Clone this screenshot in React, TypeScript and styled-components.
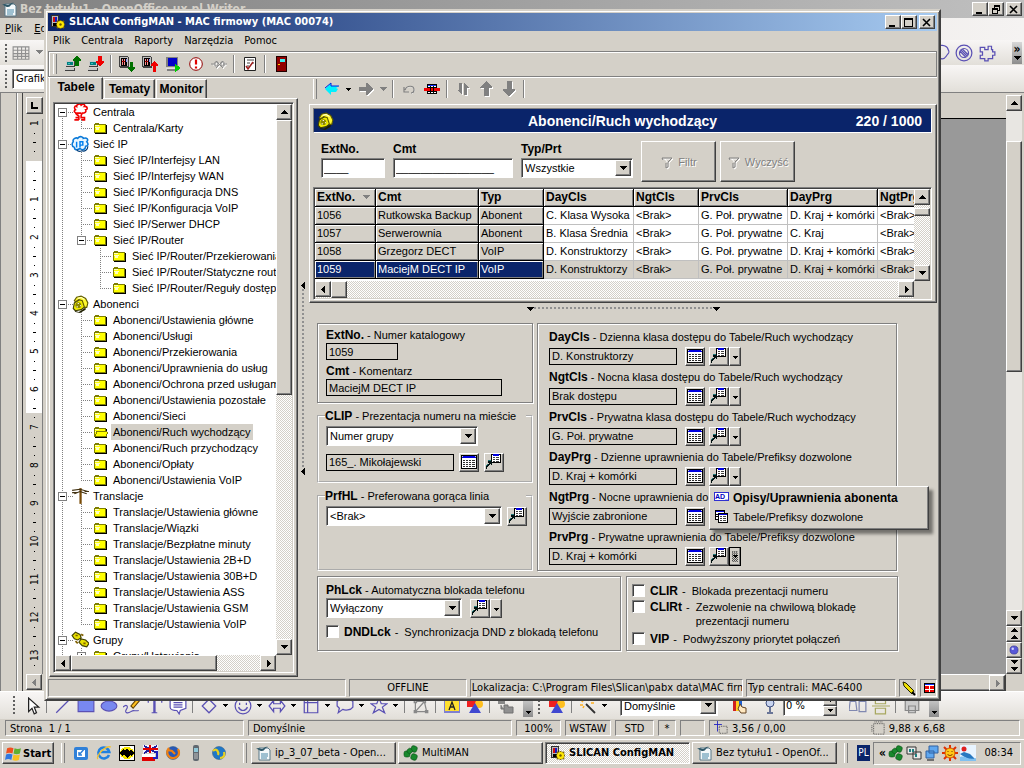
import React from "react";
import styled, { createGlobalStyle, css } from "styled-components";

const face = "#d4d0c8";
const navy = "#0a246a";
const ui = `"Liberation Sans", Arial, sans-serif`;
const tahoma = `"DejaVu Sans Condensed", "DejaVu Sans", sans-serif`;

const raised = css`
  border: 1px solid;
  border-color: #fff #404040 #404040 #fff;
  box-shadow: inset -1px -1px #808080;
  background: ${face};
`;
const sunken = css`
  border: 1px solid;
  border-color: #808080 #fff #fff #808080;
  box-shadow: inset 1px 1px #404040;
`;
const dither = css`
  background: repeating-conic-gradient(#fff 0 25%, ${face} 0 50%) 0 0 / 2px 2px;
`;

const Global = createGlobalStyle`
  * { box-sizing: border-box; }
  body { margin: 0; background: ${face}; font-family: ${ui}; font-size: 11px; line-height: 16px; color: #000; }
  button, input, select { font: inherit; color: inherit; margin: 0; padding: 0; border-radius: 0; }
  b { font-size: 12px; }
  svg { display: block; flex: none; }
`;

/* ---------- icons ---------- */

const Glyph = styled.svg.attrs({ "aria-hidden": true })<{ $crisp?: boolean }>`
  shape-rendering: ${(p) => (p.$crisp ? "crispEdges" : "auto")};
`;

type IconProps = { children: React.ReactNode; size?: number; crisp?: boolean };
const Icon = ({ children, size = 16, crisp = false }: IconProps) => (
  <Glyph width={size} height={size} viewBox="0 0 16 16" fill="none" $crisp={crisp}>
    {children}
  </Glyph>
);

const Caret = ({ color = "#000", dir = "down" }: { color?: string; dir?: "down" | "up" | "left" | "right" }) => {
  const shapes = {
    down: "M0 1h7v1h-1v1h-1v1h-1v1h-1v-1h-1v-1h-1v-1h-1z",
    up: "M3 1h1v1h1v1h1v1h1v1h-7v-1h1v-1h1v-1h1z",
    left: "M5 0v7h-1v-1h-1v-1h-1v-1h-1v-1h1v-1h1v-1h1v-1z",
    right: "M2 0v7h1v-1h1v-1h1v-1h1v-1h-1v-1h-1v-1h-1v-1z",
  };
  return (
    <Glyph width={7} height={7} viewBox="0 0 7 7" $crisp>
      <path fill={color} d={shapes[dir]} />
    </Glyph>
  );
};
const SmallCaret = () => (
  <Glyph width={5} height={5} viewBox="0 0 5 5" $crisp>
    <path fill="#000" d="M0 1h5v1H4v1H3v1H2V3H1V2H0z" />
  </Glyph>
);

const FolderIcon = ({ open = false }: { open?: boolean }) => (
  <Icon crisp>
    <path fill="#808000" d="M1 4h1V3h4v1h7v9H1z" />
    <path fill="#ffff00" d="M2 5h10v7H2z" />
    <path fill="#ffffc0" d="M2 5h4v1H2zM2 7h5v1H2zM3 8h3v2H3z" />
    <path fill="#000" d="M13 5h1v9H2v-1h11z" />
    {open && (
      <>
        <path fill="#808000" d="M3 7h11v1h1v2h-1v3H2v-3h1z" />
        <path fill="#ffff00" d="M4 8h10v2h-1v2H3v-2h1z" />
      </>
    )}
  </Icon>
);

const PhoneIcon = () => (
  <Icon size={18}>
    <path d="M4 14l-2-2 1-5 5-3 4 1 1 5-4 3z" fill="#f0ec00" stroke="#404000" />
    <path d="M3 14l4 1 6-4v2l-5 3-4-1z" fill="#202000" />
    <path d="M3 5l2-3 4-1 4 2 2 4-1 4-2 0-1-3-1-3-3-1-3 2z" fill="#fff830" stroke="#605c00" />
    <circle cx="6.500" cy="9" r="2.600" fill="#8c8800" />
    <path d="M6 7h1v1h-1zM8 9h1v1h-1zM5 10h1v1h-1z" fill="#fff" />
    <path d="M6 3l3-1 3 2" stroke="#ffffc0" />
  </Icon>
);

const ExchangeIcon = () => (
  <Icon size={18}>
    <path
      d="M6 9c-3 0-4-2-2-3-2-2 0-4 1-3 0-2 3-3 4-1 2-2 4 0 3 1 3 0 3 3 1 3 1 2-1 3-3 3l-1 2v2h3v2H9M6 9h3M4 9l2 2h1M4 13h3M3 15h4M7 11v4"
      stroke="#f00000"
      strokeWidth="1.400"
    />
  </Icon>
);
const CloudIpIcon = () => (
  <Icon size={18}>
    <path d="M2 6c-1-3 3-4 4-3 2-3 5-1 5 0 3-1 5 1 3 3 2 2 1 4-1 4 0 3-3 4-5 2-3 2-5 1-5-1-3-1-2-4-1-5z" fill="#e8f6ff" stroke="#0878d8" strokeWidth="1.400" />
    <path d="M5 13c2 3 4 1 5 1 2 1 5-1 5-4" stroke="#003c78" />
    <path d="M5 6v5M8 11V6h2.500v3H8" stroke="#0080f0" strokeWidth="1.300" />
  </Icon>
);
const PoleIcon = () => (
  <Icon size={18}>
    <path d="M8.500 1v14" stroke="#7a4c08" strokeWidth="2" />
    <path d="M1 3l7-1 7 2M3 6l5-2 6 2M1 5h4M12 4h4" stroke="#403010" />
  </Icon>
);
const GroupIcon = () => (
  <Icon size={18}>
    <path d="M1 4l3-3 4 2 1 3-3 2-3-1zM7 10l2-3 4 1 3 3-2 3-4-1z" fill="#e8e000" stroke="#404000" strokeWidth="1" />
    <path d="M4 4h2M11 11h2M9 3l2 1M4 9l2 2" stroke="#806000" strokeWidth="1.500" />
  </Icon>
);

const SlicanIcon = () => (
  <Icon>
    <path fill="#303030" d="M1 1h8v12H1z" />
    <path fill="#b8b8b8" d="M2 2h6v10H2z" />
    <path fill="#d01010" d="M3 3h2v5H3z" />
    <path fill="#1818c0" d="M5 3h2v5H5z" />
    <path fill="#000" d="M3 9h4v3H3z" />
    <path d="M10.500 6v9M6 10.500h9M7 7l7 7M14 7l-7 7" stroke="#806800" strokeWidth="2" />
    <circle cx="10.500" cy="10.500" r="3.500" fill="#ffe800" />
    <circle cx="10.500" cy="10.500" r="1.200" fill="#705800" />
  </Icon>
);

const Terminal = () => (
  <>
    <path fill="#404040" d="M1 5h9v6H1zM0 12h10v3H0z" />
    <path fill="#c8c8c8" d="M0 12h9v2H0zM1 5h8v5H1z" />
    <path fill="#008080" d="M2 6h6v3H2z" />
    <path fill="#40c0c0" d="M3 7h2v1H3z" />
  </>
);
const PcUpIcon = () => (
  <Icon crisp>
    <Terminal />
    <path fill="#007000" d="M11 0h2v1h1v1h1v1h1v2h-2v5H9V9h1V5H8V3h1V2h1V1h1z" />
  </Icon>
);
const PcDownIcon = () => (
  <Icon crisp>
    <Terminal />
    <path fill="#f00000" d="M10 0h4v5h2v2h-1v1h-1v1h-1v1h-2V9h-1V8H9V7H8V5h2z" />
  </Icon>
);
const Rack = () => (
  <>
    <path fill="#404040" d="M0 0h9v1h1v11H1v-1H0z" />
    <path fill="#c0c0c0" d="M1 1h8v9H1z" />
    <path fill="#000" d="M2 2h6v8H2z" />
    <path fill="#ff9090" d="M3 3h1v6H3zM5 3h1v6H5z" />
    <path fill="#9090ff" d="M7 3h1v3H7z" />
    <path fill="#a00000" d="M3 5h3v1H3z" />
  </>
);
const RackDownIcon = () => (
  <Icon crisp>
    <Rack />
    <path fill="#007000" d="M11 6h3v5h2v1l-3 4h-1l-3-4v-1h2z" />
  </Icon>
);
const RackUpIcon = () => (
  <Icon crisp>
    <Rack />
    <path fill="#f00000" d="M12 5h1l3 4v1h-2v6h-3v-6H9V9z" />
  </Icon>
);
const MonitorIcon = () => (
  <Icon crisp>
    <path fill="#808080" d="M1 1h12v10H1zM2 12h11v3H2z" />
    <path fill="#0000c8" d="M3 2h9v8H3z" />
    <path fill="#e0e0e0" d="M1 12h11v1H1z" />
    <path fill="#00d000" d="M10 8l6 4-6 4z" />
  </Icon>
);
const AlertIcon = () => (
  <Icon>
    <circle cx="8" cy="8" r="6.300" fill="#fff" stroke="#900000" />
    <path d="M8 3.500v5M8 10.500v2" stroke="#e00000" strokeWidth="2.200" />
  </Icon>
);
const PlugOffIcon = () => (
  <Icon>
    <path d="M1 8h3M13 8h3M4 6h3v4H4zM10 6h3v4h-3zM5 5l7 7M12 5l-7 7" stroke="#fff" transform="translate(1 1)" />
    <path d="M0 8h4M12 8h4M4 6h3v4H4zM10 6h3v4h-3zM5 5l7 7M12 5l-7 7" stroke="#8a8a8a" />
  </Icon>
);
const ReportIcon = () => (
  <Icon>
    <path d="M2.500 1.500h11v13h-11z" fill="#fff" stroke="#202020" />
    <path d="M5 4h7M5 7h3M10 7h2M5 10h2" stroke="#404040" />
    <path d="M4 10l2 3 5-7" stroke="#a02020" strokeWidth="1.500" />
  </Icon>
);
const DoorIcon = () => (
  <Icon crisp>
    <path fill="#200000" d="M3 0h11v16H3z" />
    <path fill="#900000" d="M4 1h9v14H4z" />
    <path fill="#40f0f0" d="M7 3h5v3H7z" />
    <path fill="#ffd000" d="M5 8h2v1H5z" />
  </Icon>
);

const ArrowIcon = ({ d, color = "#808080", edge = "#fff" }: { d: string; color?: string; edge?: string }) => (
  <Icon crisp>
    <path fill={edge} d={d} transform="translate(1 1)" />
    <path fill={color} d={d} />
  </Icon>
);
const BackIcon = () => (
  <Icon>
    <path d="M1 8l6-6v3h8l-3 2 2 1-2 3H7v3z" fill="#00f0ff" />
    <path d="M1 7l6-5v3h8" stroke="#0020e0" />
  </Icon>
);
const UndoIcon = () => (
  <Icon>
    <path d="M4 7c3-4 9-3 8 3l-2 2" stroke="#fff" transform="translate(1 1)" />
    <path d="M3 6v5h5M4 9c2-5 9-5 9 0 0 2-1 3-3 3" stroke="#808080" strokeWidth="1.200" />
  </Icon>
);
const RowIcon = () => (
  <Icon crisp>
    <path fill="#000" d="M3 3h10v10H3z" />
    <path fill="#fff" d="M4 5h8v7H4z" />
    <path fill="#1030ff" d="M4 4h8v1H4z" />
    <path fill="#f00000" d="M0 7h16v3H0z" />
    <path fill="#000" d="M4 6h8v1H4zM4 10h8v1H4zM6 5h1v8H6zM9 5h1v8H9z" />
  </Icon>
);

const TableIcon = () => (
  <Icon crisp>
    <path fill="#000" d="M0 1h16v14H0z" />
    <path fill="#fff" d="M1 4h14v10H1z" />
    <path fill="#0000e0" d="M1 2h14v2H1z" />
    <path fill="#d4d0c8" d="M1 2h1v1H1zM14 2h1v1h-1z" />
    <path fill="#303030" d="M2 6h2v1H2zM5 6h2v1H5zM8 6h2v1H8zM11 6h3v1h-3zM2 8h2v1H2zM5 8h2v1H5zM8 8h2v1H8zM11 8h3v1h-3zM2 10h2v1H2zM5 10h2v1H5zM8 10h2v1H8zM11 10h3v1h-3zM2 12h2v1H2zM5 12h2v1H5zM8 12h2v1H8zM11 12h3v1h-3z" />
  </Icon>
);
const JumpIcon = () => (
  <Icon crisp>
    <path fill="#000" d="M5 0h10v9H5z" />
    <path fill="#fff" d="M6 2h8v6H6z" />
    <path fill="#0000e0" d="M7 0h6v1H7z" />
    <path fill="#fff" d="M6 1h1v1H6zM13 1h1v1h-1z" />
    <path fill="#0000e0" d="M7 1h6v1H7z" />
    <path fill="#404040" d="M7 3h2v1H7zM10 3h3v1h-3zM7 5h2v1H7zM10 5h3v1h-3zM7 7h2v1H7zM10 7h3v1h-3z" />
    <path fill="#001010" d="M2 7h4v4H5v-1H4v1H3v1H2v1H1v2H0v-3h1v-1h1v-1h1V9H2z" />
    <path fill="#207878" d="M2 6h3v1H2zM0 11h1v1H0zM1 10h1v1H1z" />
  </Icon>
);
const FunnelIcon = () => (
  <Icon>
    <path d="M2 4h10l-4 4v5l-2 1v-5M4 4l3 4" stroke="#fff" transform="translate(1 1)" />
    <path d="M2 4h10l-4 4v5l-2 1v-5M2 4l1 2" stroke="#808080" />
  </Icon>
);
const TwoTablesIcon = () => (
  <Icon crisp>
    <path fill="#000" d="M1 1h10v10H1z" />
    <path fill="#fff" d="M2 3h8v7H2z" />
    <path fill="#0000e0" d="M2 2h8v1H2z" />
    <path fill="#000" d="M2 5h3v1H2zM2 7h3v1H2zM4 4h10v10H4z" />
    <path fill="#fff" d="M5 6h8v7H5z" />
    <path fill="#0000e0" d="M5 5h8v1H5z" />
    <path fill="#404040" d="M6 7h2v1H6zM9 7h3v1H9zM6 9h2v1H6zM9 9h3v1H9zM6 11h2v1H6zM9 11h3v1H9z" />
  </Icon>
);
const AdBadge = styled.span`
  width: 15px;
  height: 9px;
  margin-bottom: 4px;
  border: 1px solid #3030d0;
  background: #fff;
  color: #0000c0;
  font: bold 7px/7px ${ui};
  text-align: center;
  overflow: hidden;
`;

const WriterIcon = () => (
  <Icon>
    <path d="M3 3h9l2 2v10H3z" fill="#f4f8fa" stroke="#587888" />
    <path d="M5 9h7M5 11h7M5 13h6" stroke="#4888a8" />
    <path d="M0 4c3-2 4 0 6 0s3-3 6-2c-3 0-3 4-6 4S3 4 0 4z" fill="#305868" />
  </Icon>
);
const CloverIcon = () => (
  <Icon>
    <g fill="#18882c" stroke="#0c5018" strokeWidth="0.600">
      <rect x="8" y="1" width="6" height="6" rx="2" transform="rotate(20 11 4)" />
      <rect x="1" y="6" width="6" height="6" rx="2" />
      <rect x="8" y="9" width="6" height="6" rx="2" transform="rotate(20 11 12)" />
      <rect x="4" y="3" width="5" height="5" rx="2" transform="rotate(45 6 6)" />
    </g>
  </Icon>
);
const PencilIcon = () => (
  <Icon>
    <path d="M2 2l3 1 8 8-2 3-8-8z" fill="#f0e000" stroke="#202000" />
    <path d="M11 12l3 3" stroke="#000" strokeWidth="2" />
  </Icon>
);
const MiniRowIcon = () => (
  <Icon crisp>
    <path fill="#000" d="M2 3h11v10H2z" />
    <path fill="#fff" d="M3 5h9v7H3z" />
    <path fill="#1030ff" d="M3 4h9v1H3z" />
    <path fill="#f00000" d="M3 6h4v3H3zM8 6h4v3H8zM3 10h4v2H3zM8 10h4v2H8z" />
  </Icon>
);

/* ---------- shared controls ---------- */

const Grip = styled.span<{ $h?: number; $dots?: boolean }>`
  flex: none;
  width: 4px;
  margin: 0 4px;
  height: ${(p) => p.$h ?? 20}px;
  ${(p) =>
    p.$dots
      ? css`background: repeating-linear-gradient(#606060 0 2px, transparent 2px 4px) 1px 0 / 2px 100% no-repeat;`
      : css`border-left: 1px solid #fff; border-right: 1px solid #808080;`}
`;
const Sep = styled.span<{ $soft?: boolean }>`
  flex: none;
  width: 2px;
  height: ${(p) => (p.$soft ? 14 : 18)}px;
  margin: 0 3px;
  border-left: 1px solid #808080;
  border-right: 1px solid ${(p) => (p.$soft ? "transparent" : "#fff")};
`;
const Tool = styled.button<{ $w?: number }>`
  flex: none;
  display: flex;
  align-items: center;
  justify-content: center;
  width: ${(p) => p.$w ?? 23}px;
  height: 22px;
  border: 0;
  background: none;
`;

const Edge = styled.button<{ $size?: number }>`
  ${raised}
  flex: none;
  display: flex;
  align-items: center;
  justify-content: center;
  width: ${(p) => p.$size ?? 16}px;
  height: ${(p) => p.$size ?? 16}px;
`;
const Bar = styled.div<{ $row?: boolean; $flat?: boolean }>`
  flex: none;
  display: flex;
  flex-direction: ${(p) => (p.$row ? "row" : "column")};
  ${(p) => (p.$flat ? css`background: #e8e6e2;` : dither)}
`;
const Thumb = styled.div<{ $row?: boolean; $len: number; $before?: number }>`
  ${raised}
  flex: none;
  ${(p) => (p.$row ? `width: ${p.$len}px; margin-left: ${p.$before ?? 0}px;` : `height: ${p.$len}px; margin-top: ${p.$before ?? 0}px;`)}
`;
const Spacer = styled.span`
  flex: 1;
`;

type ScrollProps = { row?: boolean; len: number; before?: number };
const Scroll = ({ row, len, before }: ScrollProps) => (
  <Bar $row={row}>
    <Edge aria-label="Wstecz"><Caret dir={row ? "left" : "up"} /></Edge>
    <Thumb $row={row} $len={len} $before={before} />
    <Spacer />
    <Edge aria-label="Dalej"><Caret dir={row ? "right" : "down"} /></Edge>
  </Bar>
);

const TextField = styled.input<{ $w: number; $flat?: boolean }>`
  width: ${(p) => p.$w}px;
  height: ${(p) => (p.$flat ? 17 : 20)}px;
  padding: 0 2px;
  outline: 0;
  ${(p) => (p.$flat ? css`border: 1px solid #000; background: ${face};` : css`${sunken} background: #fff;`)}
`;
const ComboBox = styled.span<{ $w: number }>`
  ${sunken}
  flex: none;
  display: flex;
  width: ${(p) => p.$w}px;
  height: 20px;
  padding: 1px;
  background: #fff;
  select {
    flex: 1;
    min-width: 0;
    appearance: none;
    border: 0;
    padding-left: 2px;
    background: none;
    outline: 0;
  }
  > span {
    ${raised}
    flex: none;
    display: flex;
    align-items: center;
    justify-content: center;
    width: 16px;
  }
`;
const Combo = ({ id, value, w, label }: { id?: string; value: string; w: number; label?: string }) => (
  <ComboBox $w={w}>
    <select id={id} aria-label={label} defaultValue={value}>
      <option>{value}</option>
    </select>
    <span><Caret /></span>
  </ComboBox>
);

/* ---------- Writer window behind ---------- */

const Desktop = styled.div`
  position: relative;
  display: flex;
  flex-direction: column;
  min-height: 100vh;
  min-width: 960px;
  overflow: hidden;
`;
const WriterTitle = styled.header`
  display: flex;
  align-items: center;
  gap: 2px;
  height: 18px;
  padding: 0 2px;
  background: linear-gradient(to right, #808080, #c0c0c0);
  color: ${face};
  font: bold 12px/16px ${tahoma};
`;
const WinBtn = styled.button<{ $gap?: boolean }>`
  ${raised}
  flex: none;
  display: flex;
  align-items: center;
  justify-content: center;
  width: 16px;
  height: 14px;
  margin-left: ${(p) => (p.$gap ? 2 : 0)}px;
`;
const Controls = styled.div`
  display: flex;
  margin-left: auto;
`;
const MinGlyph = () => <Glyph width={10} height={9} viewBox="0 0 10 9" $crisp><path d="M1 7h6v2H1z" /></Glyph>;
const MaxGlyph = () => <Glyph width={10} height={9} viewBox="0 0 10 9" $crisp><path fillRule="evenodd" d="M0 0h9v9H0zM1 2v6h7V2z" /></Glyph>;
const RestoreGlyph = () => (
  <Glyph width={10} height={9} viewBox="0 0 10 9" $crisp><path fillRule="evenodd" d="M3 0h6v6H7V5h1V2H4v1H3zM1 3h6v6H1zM2 5v3h4V5z" /></Glyph>
);
const CloseGlyph = () => (
  <Glyph width={10} height={9} viewBox="0 0 10 9"><path d="M1 1l7 7M8 1l-7 7" stroke="#000" strokeWidth="1.600" /></Glyph>
);

const WriterMenu = styled.nav`
  display: flex;
  align-items: center;
  gap: 12px;
  height: 22px;
  padding-left: 5px;
  background: linear-gradient(to right, ${face}, #f5f3f2);
  font: 11px/16px ${tahoma};
`;
const WriterTools = styled.div<{ $h: number }>`
  display: flex;
  align-items: center;
  height: ${(p) => p.$h}px;
  background: linear-gradient(#f8f6f5, #e2dfd9);
`;
const Overflow = styled.button<{ $h: number }>`
  flex: none;
  display: flex;
  flex-direction: column;
  align-items: center;
  justify-content: flex-end;
  width: 10px;
  height: ${(p) => p.$h}px;
  padding-bottom: 2px;
  border: 0;
  background: linear-gradient(#d8d8d8, #8c8c8c);
  font: bold 12px/12px ${tahoma};
`;
const StyleBox = styled.input`
  ${sunken}
  width: 120px;
  height: 20px;
  padding: 0 3px;
  font: 11px ${tahoma};
`;

const Document = styled.section`
  flex: 1;
  display: flex;
  min-height: 0;
  border-top: 1px solid #808080;
`;
const Gutter = styled.div`
  flex: none;
  width: 23px;
  border-right: 1px solid #404040;
  background: linear-gradient(#808080, #808080) 15px 0 / 1px 100% no-repeat,
    linear-gradient(#fff, #fff) 16px 0 / 1px 100% no-repeat, ${face};
  border-left: 1px solid #808080;
`;
const RulerCol = styled.div`
  flex: none;
  display: flex;
  flex-direction: column;
  width: 22px;
  padding: 4px 2px 0 3px;
`;
const Corner = styled.button`
  ${raised}
  display: flex;
  align-items: center;
  justify-content: center;
  height: 17px;
  margin-bottom: 5px;
`;
const Ruler = styled.ol`
  height: 555px;
  margin: 0;
  padding: 0;
  overflow: hidden;
  list-style: none;
  border-right: 1px solid #808080;
  background: linear-gradient(${face} 42px, #fff 42px 294px, ${face} 294px);
`;
const Tick = styled.li`
  display: flex;
  flex-direction: column;
  height: 38px;
  span {
    height: 9px;
    margin-bottom: 1px;
    font: 10px/15px ${tahoma};
    writing-mode: vertical-rl;
    transform: rotate(180deg);
    text-align: center;
    white-space: nowrap;
    display: flex;
    justify-content: center;
    align-self: center;
  }
  i {
    height: 9px;
    width: 3px;
    align-self: center;
    background: linear-gradient(#000, #000) 1px 4px / 1px 1px no-repeat;
  }
  i:nth-of-type(2) {
    background: linear-gradient(#000, #000) 0 4px / 3px 1px no-repeat;
  }
`;
const Canvas = styled.div`
  flex: 1;
  display: flex;
  flex-direction: column;
  min-width: 0;
`;
const TopRuler = styled.div`
  height: 26px;
  border-bottom: 1px solid #000;
`;
const Sheet = styled.div`
  flex: 1;
  background: #999;
`;
const HBar = styled.div`
  ${raised}
  display: flex;
  justify-content: flex-end;
  height: 17px;
`;
const RightRail = styled.div`
  flex: none;
  display: flex;
  flex-direction: column;
  width: 18px;
  padding: 2px 2px 17px 0;
  background: ${face};
  ${Bar} { flex: 1; }
`;
const Double = styled.span`
  display: flex;
  flex-direction: column;
`;

const StatusRow = styled.footer`
  display: flex;
  gap: 4px;
  height: 20px;
  padding: 1px 4px 3px 5px;
  font: 11px/15px ${tahoma};
`;
const StatusCell = styled.span<{ $w?: number; $grow?: number; $center?: boolean }>`
  flex: ${(p) => (p.$grow ? `${p.$grow} ${p.$grow} 0` : "none")};
  ${(p) => p.$w && `width: ${p.$w}px;`}
  min-width: 0;
  display: flex;
  align-items: center;
  gap: 4px;
  padding: 0 4px;
  justify-content: ${(p) => (p.$center ? "center" : "flex-start")};
  overflow: hidden;
  white-space: pre;
  border: 1px solid;
  border-color: #808080 #fff #fff #808080;
`;

/* ---------- taskbar ---------- */

const Taskbar = styled.nav`
  display: flex;
  align-items: center;
  height: 29px;
  padding: 0 3px 2px 2px;
  border-top: 1px solid #fff;
  font: 11px/16px ${tahoma};
`;
const Start = styled.button`
  ${raised}
  display: flex;
  align-items: center;
  gap: 1px;
  width: 52px;
  height: 22px;
  padding-left: 2px;
  margin-right: 3px;
  font: bold 11px ${tahoma};
`;
const Task = styled.button<{ $on?: boolean }>`
  flex: 1 1 145px;
  max-width: 145px;
  min-width: 0;
  display: flex;
  align-items: center;
  gap: 3px;
  height: 22px;
  margin-right: 2px;
  padding: 0 4px;
  white-space: nowrap;
  overflow: hidden;
  ${(p) => (p.$on ? css`${dither} ${sunken} font-weight: bold;` : raised)}
`;
const Lang = styled.span`
  width: 13px;
  margin: 0 3px 0 5px;
  background: ${navy};
  color: #fff;
  font-size: 10px;
  text-align: center;
`;
const Tray = styled.div`
  display: flex;
  align-items: center;
  gap: 2px;
  width: 148px;
  height: 23px;
  padding: 0 7px 0 5px;
  border: 1px solid;
  border-color: #808080 #fff #fff #808080;
`;

/* ---------- ConfigMAN window ---------- */

const Window = styled.main`
  position: absolute;
  top: 9px;
  bottom: 67px;
  left: 44px;
  right: 83px;
  display: flex;
  flex-direction: column;
  padding: 2px;
  background: ${face};
  border: 2px solid;
  border-color: ${face} #404040 #404040 ${face};
  box-shadow: inset 1px 1px #fff, inset -1px -1px #808080;
`;
const TitleBar = styled.header`
  flex: none;
  display: flex;
  align-items: center;
  gap: 3px;
  height: 18px;
  padding: 0 2px;
  background: linear-gradient(to right, ${navy}, #a6caf0);
  color: #fff;
  h1 {
    margin: 0;
    font: bold 11px/16px ${tahoma};
    white-space: nowrap;
  }
`;
const Menu = styled.nav`
  flex: none;
  display: flex;
  gap: 11px;
  height: 20px;
  padding: 0 5px;
  font: 11px/20px ${tahoma};
  a {
    color: inherit;
    text-decoration: none;
  }
`;
const Toolbar = styled.div<{ $plain?: boolean }>`
  flex: none;
  display: flex;
  align-items: center;
  height: ${(p) => (p.$plain ? 24 : 26)}px;
  ${(p) => !p.$plain && css`border: 1px solid #808080; box-shadow: inset 1px 1px #fff, 0 1px #fff;`}
`;
const Body = styled.div`
  flex: 1;
  display: flex;
  min-height: 0;
`;
const Side = styled.aside`
  flex: none;
  display: flex;
  flex-direction: column;
  width: 250px;
  padding: 0 0 2px 1px;
`;
const Tabs = styled.div`
  display: flex;
  align-items: flex-end;
  height: 21px;
`;
const Tab = styled.button<{ $on?: boolean }>`
  ${raised}
  position: relative;
  width: ${(p) => (p.$on ? 54 : 51)}px;
  height: ${(p) => (p.$on ? 22 : 19)}px;
  margin-right: 1px;
  margin-bottom: ${(p) => (p.$on ? -1 : 0)}px;
  padding-bottom: ${(p) => (p.$on ? 3 : 0)}px;
  z-index: ${(p) => (p.$on ? 1 : 0)};
  border-bottom: 0;
  box-shadow: inset -1px 0 #808080;
  font: bold 12px/16px ${ui};
`;
const TabPage = styled.div`
  ${raised}
  flex: 1;
  display: flex;
  min-height: 0;
  padding: 3px;
`;
const TreeBox = styled.div`
  ${sunken}
  flex: 1;
  display: grid;
  grid-template: minmax(0, 1fr) 16px / minmax(0, 1fr) 16px;
  padding: 1px;
  min-width: 0;
`;
const Tree = styled.ul`
  margin: 0;
  padding: 0;
  overflow: hidden;
  list-style: none;
  background: #fff;
`;
const Branch = styled.li<{ $level: number }>`
  display: flex;
  align-items: center;
  height: 16px;
  white-space: nowrap;
  > svg {
    margin-left: ${(p) => (p.$level === 0 ? -3 : 0)}px;
    margin-right: 2px;
  }
`;
const NodeLabel = styled.span<{ $on?: boolean }>`
  padding: 0 2px;
  background: ${(p) => (p.$on ? face : "none")};
`;
const dotV = "repeating-linear-gradient(#808080 0 1px, transparent 1px 2px)";
const dotH = "repeating-linear-gradient(to right, #808080 0 1px, transparent 1px 2px)";
const Guide = styled.span<{ $v: "full" | "top" | "bottom" | "none"; $h: boolean }>`
  flex: none;
  width: 19px;
  height: 16px;
  padding: 4px 0 0 3px;
  background: ${(p) => {
    const layers: string[] = [];
    if (p.$v === "full") layers.push(`${dotV} 7px 0 / 1px 16px no-repeat`);
    if (p.$v === "top") layers.push(`${dotV} 7px 0 / 1px 9px no-repeat`);
    if (p.$v === "bottom") layers.push(`${dotV} 7px 8px / 1px 8px no-repeat`);
    if (p.$h) layers.push(`${dotH} 7px 8px / 12px 1px no-repeat`);
    return layers.length ? layers.join(",") : "none";
  }};
`;
const Expander = styled.button<{ $plus?: boolean }>`
  display: block;
  width: 9px;
  height: 9px;
  border: 1px solid #808080;
  background: linear-gradient(#000, #000) 1px 3px / 5px 1px no-repeat,
    ${(p) => p.$plus && "linear-gradient(#000, #000) 3px 1px / 1px 5px no-repeat,"} #fff;
`;

type Node = { t: string; l: number; icon?: React.ReactNode; box?: "-" | "+"; last?: boolean; on?: boolean };
const kids = (prefix: string, names: string[], sel?: string): Node[] =>
  names.map((n, i) => ({ t: `${prefix}/${n}`, l: 1, last: i === names.length - 1, on: n === sel }));
const nodes: Node[] = [
  { t: "Centrala", l: 0, box: "-", icon: <ExchangeIcon /> },
  ...kids("Centrala", ["Karty"]),
  { t: "Sieć IP", l: 0, box: "-", icon: <CloudIpIcon /> },
  ...kids("Sieć IP", ["Interfejsy LAN", "Interfejsy WAN", "Konfiguracja DNS", "Konfiguracja VoIP", "Serwer DHCP"]).map((n) => ({ ...n, last: false })),
  { t: "Sieć IP/Router", l: 1, box: "-", last: true },
  { t: "Sieć IP/Router/Przekierowania", l: 2 },
  { t: "Sieć IP/Router/Statyczne routowanie", l: 2 },
  { t: "Sieć IP/Router/Reguły dostępu", l: 2, last: true },
  { t: "Abonenci", l: 0, box: "-", icon: <PhoneIcon /> },
  ...kids(
    "Abonenci",
    ["Ustawienia główne", "Usługi", "Przekierowania", "Uprawnienia do usług", "Ochrona przed usługami", "Ustawienia pozostałe", "Sieci", "Ruch wychodzący", "Ruch przychodzący", "Opłaty", "Ustawienia VoIP"],
    "Ruch wychodzący",
  ),
  { t: "Translacje", l: 0, box: "-", icon: <PoleIcon /> },
  ...kids("Translacje", ["Ustawienia główne", "Wiązki", "Bezpłatne minuty", "Ustawienia 2B+D", "Ustawienia 30B+D", "Ustawienia ASS", "Ustawienia GSM", "Ustawienia VoIP"]),
  { t: "Grupy", l: 0, box: "-", icon: <GroupIcon /> },
  { t: "Grupy/Ustawienia", l: 1, box: "+" },
];

const TreeView = () => (
  <Tree>
    {nodes.map((n, i) => (
      <Branch key={n.t} $level={n.l}>
        {Array.from({ length: n.l + 1 }, (_, c) => {
          const own = c === n.l;
          const v = i === 0 ? "bottom" : own ? (n.last ? "top" : "full") : c === 0 ? "full" : "none";
          return (
            <Guide key={c} $v={v} $h={own}>
              {own && n.box && <Expander $plus={n.box === "+"} aria-label={n.t} />}
            </Guide>
          );
        })}
        {n.icon ?? <FolderIcon open={n.on} />}
        <NodeLabel $on={n.on}>{n.t}</NodeLabel>
      </Branch>
    ))}
  </Tree>
);

const Splitter = styled.div<{ $row?: boolean }>`
  flex: none;
  display: flex;
  align-items: center;
  justify-content: center;
  flex-direction: ${(p) => (p.$row ? "row" : "column")};
  ${(p) => (p.$row ? "height: 12px;" : "width: 11px;")}
  > i {
    ${(p) => (p.$row ? "width: 179px; height: 4px;" : "height: 179px; width: 4px;")}
    background: radial-gradient(circle at 1px 1px, #909090 1px, transparent 1px) 0 0 / 4px 4px;
  }
`;
const MainCol = styled.div`
  flex: 1;
  display: flex;
  flex-direction: column;
  min-width: 0;
`;
const Panel = styled.section`
  ${raised}
  flex: none;
  margin-top: 3px;
  padding: 3px 4px 2px 3px;
`;
const Banner = styled.div`
  display: grid;
  grid-template-columns: 1fr auto 1fr;
  align-items: center;
  height: 25px;
  padding: 0 2px;
  border: 1px solid;
  border-color: #808080 #fff #fff #808080;
  background: ${navy};
  color: #fff;
  font: bold 14px/20px ${ui};
  h2 {
    margin: 0;
    font: inherit;
  }
  span {
    padding-right: 7px;
    text-align: right;
  }
`;
const Filters = styled.form`
  display: flex;
  align-items: flex-end;
  gap: 8px;
  height: 54px;
  padding: 0 8px 5px;
`;
const Stack = styled.div`
  display: flex;
  flex-direction: column;
  gap: 1px;
  padding-bottom: 4px;
  > label {
    font: bold 12px/16px ${ui};
  }
`;
const FilterBtn = styled.button`
  ${raised}
  display: flex;
  align-items: center;
  justify-content: center;
  gap: 2px;
  width: 75px;
  height: 41px;
  margin-right: -4px;
  white-space: nowrap;
  &:disabled {
    color: #808080;
    text-shadow: 1px 1px #fff;
  }
`;

const GridBox = styled.div`
  ${sunken}
  display: grid;
  grid-template: 92px 17px / minmax(0, 1fr) 16px;
  padding: 1px;
`;
const TableClip = styled.div`
  overflow: hidden;
  background: #fff;
`;
const Table = styled.table`
  table-layout: fixed;
  width: 632px;
  border-spacing: 0;
  th, td {
    height: 18px;
    padding: 0 0 0 2px;
    text-align: left;
    white-space: nowrap;
    overflow: hidden;
    line-height: 15px;
    font-weight: normal;
    border-right: 1px solid #c0c0c0;
    border-bottom: 1px solid #c0c0c0;
  }
  th {
    background: ${face};
    border-color: #000;
    box-shadow: inset 1px 1px #fff, inset -1px -1px #808080;
  }
  thead th {
    font-weight: bold;
    font-size: 12px;
  }
  thead svg {
    display: inline-block;
    margin-left: 8px;
  }
`;
const Line = styled.tr<{ $on?: boolean }>`
  ${(p) => p.$on && css`
    th { background: ${navy}; color: #fff; }
    td { background: ${face}; }
  `}
`;
const columns: [string, number][] = [
  ["ExtNo.", 61], ["Cmt", 103], ["Typ", 65], ["DayCls", 90], ["NgtCls", 65], ["PrvCls", 89], ["DayPrg", 90], ["NgtPrg", 69],
];
const rows = [
  ["1056", "Rutkowska Backup", "Abonent", "C. Klasa Wysoka", "<Brak>", "G. Poł. prywatne", "D. Kraj + komórki", "<Brak>"],
  ["1057", "Serwerownia", "Abonent", "B. Klasa Średnia", "<Brak>", "G. Poł. prywatne", "C. Kraj", "<Brak>"],
  ["1058", "Grzegorz DECT", "VoIP", "D. Konstruktorzy", "<Brak>", "G. Poł. prywatne", "D. Kraj + komórki", "<Brak>"],
  ["1059", "MaciejM DECT IP", "VoIP", "D. Konstruktorzy", "<Brak>", "G. Poł. prywatne", "D. Kraj + komórki", "<Brak>"],
];

/* ---------- form ---------- */

const Form = styled.form`
  flex: 1;
  display: flex;
  flex-direction: column;
  gap: 5px;
  padding: 8px 0 0 8px;
  min-height: 0;
`;
const Columns = styled.div<{ $gap: number }>`
  display: flex;
  gap: ${(p) => p.$gap}px;
`;
const LeftForms = styled.div`
  display: flex;
  flex-direction: column;
  gap: 6px;
  width: 216px;
`;
const groove = css`
  margin: 0;
  border: 1px solid #808080;
  outline: 0;
  box-shadow: 1px 1px #fff, inset 1px 1px #fff;
`;
const Group = styled.div<{ $w: number; $h: number; $pad: string }>`
  ${groove}
  width: ${(p) => p.$w}px;
  min-height: ${(p) => p.$h}px;
  padding: ${(p) => p.$pad};
`;
const Framed = styled.fieldset<{ $h: number }>`
  min-width: 0;
  min-height: ${(p) => p.$h}px;
  margin: 0;
  padding: 3px 7px 0 7px;
  border: 2px groove #fff;
  legend {
    width: 201px;
    height: 14px;
    margin-left: -1px;
    padding: 0;
    line-height: 14px;
    white-space: nowrap;
  }
`;
const Caption = styled.label`
  display: block;
  height: 16px;
  white-space: nowrap;
`;
const Row = styled.div<{ $gap?: number; $h?: number }>`
  display: flex;
  align-items: center;
  gap: ${(p) => p.$gap ?? 4}px;
  height: ${(p) => p.$h ?? 20}px;
`;
const Small = styled.button<{ $w?: number }>`
  ${raised}
  flex: none;
  display: flex;
  align-items: center;
  justify-content: center;
  width: ${(p) => p.$w ?? 20}px;
  height: 19px;
`;
const Split = styled.span`
  position: relative;
  display: flex;
`;
const Popup = styled.ul`
  position: absolute;
  top: 19px;
  left: 0;
  z-index: 5;
  width: 220px;
  margin: 0;
  padding: 2px 3px;
  list-style: none;
  ${raised}
  box-shadow: inset -1px -1px #808080, 4px 4px 3px rgba(0, 0, 0, 0.45);
  li {
    display: flex;
    align-items: center;
    gap: 4px;
    height: 19px;
    padding-left: 1px;
    white-space: nowrap;
  }
  li > svg, li > ${AdBadge} { flex: none; }
  li > svg { margin-right: -1px; }
`;
const DropBtn = styled(Small)<{ $pressed?: boolean }>`
  padding-top: 2px;
  ${(p) => p.$pressed && css`
    border-color: #000;
    background: repeating-conic-gradient(#404040 0 25%, transparent 0 50%) 4px 3px / 2px 2px space, ${face};
    background-clip: content-box, border-box;
    padding: 3px 2px;
  `}
`;
const JumpSplit = ({ pressed, menu }: { pressed?: boolean; menu?: boolean }) => (
  <Split>
    <Small type="button" aria-label="Przejdź"><JumpIcon /></Small>
    <DropBtn type="button" $w={12} $pressed={pressed} aria-label="Więcej"><SmallCaret /></DropBtn>
    {menu && (
      <Popup>
        <li><AdBadge>AD_</AdBadge><b>Opisy/Uprawnienia abonenta</b></li>
        <li><TwoTablesIcon />Tabele/Prefiksy dozwolone</li>
      </Popup>
    )}
  </Split>
);
const Item = styled.div`
  height: 40px;
`;
const Picker = styled.div`
  display: flex;
  align-items: center;
  height: 22px;
  > ${Small} { margin: 0 4px 0 8px; }
`;
const access = [
  ["DayCls", "Dzienna klasa dostępu do Tabele/Ruch wychodzący", "D. Konstruktorzy"],
  ["NgtCls", "Nocna klasa dostępu do Tabele/Ruch wychodzący", "Brak dostępu"],
  ["PrvCls", "Prywatna klasa dostępu do Tabele/Ruch wychodzący", "G. Poł. prywatne"],
  ["DayPrg", "Dzienne uprawnienia do Tabele/Prefiksy dozwolone", "D. Kraj + komórki"],
  ["NgtPrg", "Nocne uprawnienia do Tabele/Prefiksy dozwolone", "Wyjście zabronione"],
  ["PrvPrg", "Prywatne uprawnienia do Tabele/Prefiksy dozwolone", "D. Kraj + komórki"],
];
const Check = styled.label`
  display: flex;
  align-items: flex-start;
  white-space: pre-line;
  line-height: 14px;
  min-height: 16px;
  > b { margin: 0 4px 0 5px; line-height: 14px; }
  > span { margin-left: 6px; }
`;
const Box = styled.input.attrs({ type: "checkbox" })`
  ${sunken}
  appearance: none;
  flex: none;
  width: 13px;
  height: 13px;
  background: #fff;
`;
const Vip = styled(Check)`
  margin-top: 4px;
`;
const Dnd = styled(Check)`
  margin-top: 7px;
`;
const Block = styled.div`
  margin-bottom: 3px;
`;

const AppStatus = styled.footer`
  flex: none;
  display: flex;
  gap: 3px;
  height: 18px;
  font: 11px/16px ${tahoma};
  ${StatusCell} { padding: 0 1px; gap: 0; }
`;

/* ---------- drawing toolbar data ---------- */

const purple = "#5a50b4";
const stroke = (d: string, color = purple, fill = "none") => (
  <Icon size={18}><path d={d} stroke={color} fill={fill} strokeWidth="1.100" /></Icon>
);
const Shapes = (
  <Icon>
    <path fill="#f02020" d="M0 2h9v7H0z" />
    <circle cx="12" cy="6" r="4" fill="#ffc020" />
    <path fill="#4048d0" d="M8 5l6 10H2z" />
  </Icon>
);
const drawing: React.ReactNode[] = [
  stroke("M5 1v12l3-3 2 5 2-1-2-5h4z", "#202020", "#fff"),
  "|",
  stroke("M2 14L14 2"),
  <Icon size={18} key="r"><path d="M1 3h14v10H1z" fill="#7888f0" stroke={purple} /></Icon>,
  <Icon size={18} key="e"><ellipse cx="8" cy="8" rx="7" ry="4.500" fill="#7888f0" stroke={purple} /></Icon>,
  <Icon size={18} key="f"><path d="M0 9c3-3 5-1 3 2s1 4 4 2 3 0 7-1" stroke={purple} /><path d="M7 8l6-7 2 2-6 7z" fill="#ffc020" stroke="#604000" /></Icon>,
  stroke("M2 2h12v3M2 2v3M8 2v12M7 2v12M5 14h5", purple),
  stroke("M1 3c3-2 11-2 14 0v7l-5 2-1 3-2-3c-3 0-6-1-6-3zM4 5h8M4 7h8M4 9h8", purple, "#fff"),
  "|",
  stroke("M8 2l6 6-6 6-6-6z"), "v",
  stroke("M8 1a7 7 0 100 14A7 7 0 108 1M5 5v2M11 5v2M4 9c2 4 6 4 8 0"), "v",
  stroke("M1 8l4-5v3h6V3l4 5-4 5v-3H5v3z"), "v",
  stroke("M2 2h12v12H2zM5 2v12M2 5h12"), "v",
  stroke("M1 4c3-3 11-3 14 0v5c-2 3-7 3-9 2l-4 3 1-4-2-2z"), "v",
  stroke("M8 1l2 5h5l-4 3 2 5-5-3-5 3 2-5-4-3h5z"), "v",
  "|",
  stroke("M4 4h7M3 13L11 4M11 4l2 9H3V4M2 3h2v2H2zM10 3h2v2h-2zM2 12h2v2H2zM12 12h2v2h-2z", "#888"),
  "|",
  <Icon key="a"><path d="M0 2h16v12H0z" fill="#ffe030" stroke="#8080d0" strokeWidth="2" /><path d="M5 12l3-8 3 8M6 9h4" stroke="#202020" strokeWidth="1.300" /></Icon>,
  Shapes,
  "|",
  <Icon key="x"><path d="M0 2h7v4H0z" fill="#888" /><path d="M3 7v4h3M6 7h4v2h5v6H6z" fill="#909090" stroke="#707070" /></Icon>,
];
const wand = <Icon><path d="M6 6l9 9" stroke="#303030" strokeWidth="1.800" /><path d="M5 0v3M1 2l2 2M0 7h3M9 1l-1 2M3 10l1-2M11 5h3" stroke="#ffb020" strokeWidth="1.500" /></Icon>;
const books = <Icon><path d="M1 1h3v12H1z" fill="#d02020" /><path d="M4 1h3v12H4z" fill="#ffd020" /><path d="M7 1h3v12H7z" fill="#2060d0" /><path d="M8 6l2 3 4 1v5H9l-3-4z" fill="#ffe8c0" stroke="#604020" /></Icon>;
const pin = <Icon><circle cx="8" cy="5" r="4" fill="#c8d4f0" stroke="#405080" /><path d="M8 9v5M5 15h6" stroke="#405080" strokeWidth="1.500" /></Icon>;

const Pct = styled.input`
  ${sunken}
  width: 40px;
  height: 20px;
  padding-left: 2px;
  margin-left: 2px;
  font: 11px ${tahoma};
`;
const Spin = styled.span`
  display: flex;
  flex-direction: column;
  button { width: 14px; height: 10px; }
`;

const DrawTools = styled(WriterTools)`
  padding-left: 8px;
  border-top: 1px solid #fff;
  overflow: hidden;
`;
const Gap = styled.span<{ $w: number }>`
  flex: none;
  width: ${(p) => p.$w}px;
`;

const Quick = styled.a`
  display: flex;
  width: 23px;
  justify-content: center;
`;
const orb = (a: string, b: string, d: string) => (
  <Icon><circle cx="8" cy="8" r="6.500" fill={a} stroke="#205080" strokeWidth="0.500" /><path d={d} stroke={b} strokeWidth="2.200" /></Icon>
);
const quick: [string, React.ReactNode][] = [
  ["Outlook", <Icon key="o"><rect x="1" y="2" width="14" height="13" rx="2" fill="#3080d8" /><path d="M4 5h8v7H4z" fill="#fff" /><path d="M6 10l6-7M6 7v3h3" stroke="#3080d8" strokeWidth="1.500" /></Icon>],
  ["Internet Explorer", <Icon key="i"><path d="M13 10a5.500 5.500 0 11.300-3H5" stroke="#2080e0" strokeWidth="2.600" /><path d="M2 14C-1 12 9 0 15 2" stroke="#f0c030" strokeWidth="1.300" /></Icon>],
  ["The Bat!", <Icon key="b" crisp><path fill="#000" d="M0 0h16v16H0z" /><path fill="#fff" d="M1 1h14v14H1z" /><ellipse cx="8" cy="8" rx="7" ry="6" fill="#f8e800" /><path fill="#000" d="M1 8l3-4 2 2 1-2h2l1 2 2-2 3 4-2 3-2-1-3 3-3-3-2 1z" /></Icon>],
  ["Słownik", <Icon key="s" crisp><path fill="#f4f4ff" d="M1 0h15v8H1z" /><path stroke="#2020a0" strokeWidth="2" d="M2 1l13 7M15 1L2 8" /><path stroke="#e00000" strokeWidth="2" d="M8 0v8M1 4h15" /><path fill="#fff" d="M0 9h13v3H0z" /><path fill="#e00000" d="M0 12h13v4H0z" /><path stroke="#2020c0" strokeWidth="2" d="M15 6v7h-4" /></Icon>],
  ["Firefox", orb("#2858b8", "#f08010", "M4 3C0 8 4 14 9 13s6-5 4-9M3 5l4 1 3 3")],
  ["Telefon", <Icon key="t"><rect x="5" y="0" width="6" height="16" rx="2" fill="#606870" /><path d="M6 3h4v4H6z" fill="#90c8d8" /><path d="M6 9h4M6 11h4M6 13h4" stroke="#c0c0c0" /></Icon>],
  ["Messenger", orb("#2078c8", "#e8d020", "M2 6c4-4 6 2 5 4M9 13c4 0 5-3 4-6")],
];
const tray = [
  <CloverIcon key="1" />,
  <Icon key="2"><path d="M1 2h9v7H1zM7 7h8v7H7z" fill="#e8e8e8" stroke="#303030" /><path d="M3 4h2v3H3zM6 4h2v3H6zM9 9h2v3H9z" fill="#208080" /></Icon>,
  <Icon key="3"><path d="M5 1h9v7H5zM2 6h8v7H2z" fill="#60a8f0" stroke="#3060a0" /><path d="M3 15h7" stroke="#707070" strokeWidth="2" /></Icon>,
  <Icon key="4"><path d="M8 0v16M0 8h16M2 2l12 12M14 2L2 14" stroke="#e03000" strokeWidth="2" /><circle cx="8" cy="8" r="5" fill="#ffc818" stroke="#d05000" /><path d="M6 6v1M10 6v1M5.500 9c1 2 4 2 5 0" stroke="#803000" /></Icon>,
  <Icon key="5"><path d="M0 0h16v16H0z" fill="#e8f4ff" /><circle cx="4" cy="4" r="2.500" fill="#e02020" /><path d="M4 7l6 2 6 6H9L0 9z" fill="#2878c0" /><path d="M0 12c5-2 9 4 16 1v3H0z" fill="#80c0f0" /></Icon>,
];

const Logo = () => (
  <Icon size={17}>
    <path d="M2 3c2-1 4-1 6 0L7 8C5 7 3 7 1 8z" fill="#f05020" />
    <path d="M9 3c2 1 4 1 6 0l-1 5c-2 1-4 1-6 0z" fill="#60b030" />
    <path d="M1 9c2-1 4-1 6 0l-1 5c-2-1-4-1-6 0z" fill="#3078e0" />
    <path d="M8 9c2 1 4 1 6 0l-1 5c-2 1-4 1-6 0z" fill="#f8c020" />
  </Icon>
);

const Writer = () => (
  <>
    <WriterTitle>
      <WriterIcon />
      Bez tytułu1 - OpenOffice.ux.pl Writer
      <Controls>
        <WinBtn aria-label="Minimalizuj"><MinGlyph /></WinBtn>
        <WinBtn aria-label="Przywróć"><RestoreGlyph /></WinBtn>
        <WinBtn $gap aria-label="Zamknij"><CloseGlyph /></WinBtn>
      </Controls>
    </WriterTitle>
    <WriterMenu>
      <span><u>P</u>lik</span>
      <span><u>E</u>dycja</span>
    </WriterMenu>
    <WriterTools $h={25}>
      <Grip $h={18} $dots />
      <Icon size={18}><path d="M1 2.500h14v11H1zM1 5.500h14M1 8.500h14M1 11h14M5 2v12M8.500 2v12M12 2v12" stroke="#909090" /></Icon>
      <Gap $w={6} />
      <Caret color="#808080" />
      <Spacer />
      <Tool>{stroke("M2 3c4-3 11-2 12 1s2 3 0 5-2 5-6 4-8 0-7-4z")}</Tool>
      <Tool>{stroke("M8 1a7 7 0 100 14A7 7 0 108 1M8 4a4 4 0 100 8A4 4 0 108 4M5 5l6 6M6.500 4.500l5 5M4.500 6.500l5 5")}</Tool>
      <Tool>{stroke("M2 3h4v2h3V2h3v3h1v2h2v3h-2v3H9v2H6v-2H2v-3h2V7H2z")}</Tool>
      <Gap $w={14} />
      <Overflow $h={22}>»<Caret /></Overflow>
      <Gap $w={2} />
    </WriterTools>
    <WriterTools $h={27}>
      <Grip $h={18} $dots />
      <StyleBox aria-label="Styl" defaultValue="Grafika" />
    </WriterTools>
    <Document>
      <Gutter />
      <RulerCol>
        <Corner aria-label="Tabulator"><Glyph width={7} height={7} viewBox="0 0 7 7" $crisp><path d="M0 0h2v5h5v2H0z" /></Glyph></Corner>
        <Ruler>
          {["1", "", "1", "2", "3", "4", "5", "6", "7", "8", "9", "10", "11", "12", "13"].map((n, i) => (
            <Tick key={i}><span>{n}</span><i /><i /><i /></Tick>
          ))}
        </Ruler>
        <Edge aria-label="W lewo"><Caret dir="left" color="#808080" /></Edge>
      </RulerCol>
      <Canvas>
        <TopRuler />
        <Sheet />
        <HBar><Edge aria-label="W prawo"><Caret dir="right" color="#808080" /></Edge></HBar>
      </Canvas>
      <RightRail>
        <Bar $flat>
          <Edge aria-label="W górę"><Caret dir="up" /></Edge>
          <Thumb $len={231} $before={30} />
          <Spacer />
          <Edge aria-label="W dół"><Caret /></Edge>
          <Edge aria-label="Poprzednia strona"><Double><Caret dir="up" /><Caret dir="up" /></Double></Edge>
          <Edge aria-label="Nawigacja"><Icon size={10}><circle cx="8" cy="8" r="6.500" fill="#5858d8" stroke="#303090" /><circle cx="6" cy="6" r="2" fill="#d0d0ff" /></Icon></Edge>
          <Edge aria-label="Następna strona"><Double><Caret /><Caret /></Double></Edge>
        </Bar>
      </RightRail>
    </Document>
    <DrawTools $h={28}>
      <Grip $h={20} $dots />
      {drawing.map((d, i) =>
        d === "|" ? <Sep key={i} $soft /> : d === "v" ? <Tool key={i} $w={11} aria-label="Więcej"><SmallCaret /></Tool> : <Tool key={i}>{d}</Tool>,
      )}
      <Gap $w={6} />
      <Overflow $h={22}><SmallCaret /></Overflow>
      <Grip $h={20} $dots />
      <Tool>{Shapes}</Tool>
      <Sep $soft />
      <Tool>{wand}</Tool>
      <Tool $w={11} aria-label="Więcej"><SmallCaret /></Tool>
      <Gap $w={10} />
      <Combo w={98} value="Domyślnie" label="Styl linii" />
      <Gap $w={10} />
      <Tool>{books}</Tool>
      <Gap $w={7} />
      <Tool>{pin}</Tool>
      <Pct aria-label="Przezroczystość" defaultValue="0 %" />
      <Spin>
        <Edge aria-label="Więcej"><SmallCaret /></Edge>
        <Edge aria-label="Mniej"><SmallCaret /></Edge>
      </Spin>
      <Gap $w={9} />
      <Tool>{stroke("M1 4h5l1 8H0zM9 4h6v9H9z", "#8088b0")}</Tool>
      <Tool>{stroke("M3 1h9v5H3zM3 10h9v5H3zM0 8h16", "#a8a860")}</Tool>
      <Sep $soft />
      <Tool>{stroke("M2 2h12v10H2zM5 8h6v6H5z", "#888", "#ccc")}</Tool>
      <Gap $w={6} />
      <Overflow $h={22}><SmallCaret /></Overflow>
    </DrawTools>
    <StatusRow>
      <StatusCell $grow={238}>Strona  1 / 1</StatusCell>
      <StatusCell $grow={264}>Domyślnie</StatusCell>
      <StatusCell $w={45} $center>100%</StatusCell>
      <StatusCell $w={46} $center>WSTAW</StatusCell>
      <StatusCell $w={39} $center>STD</StatusCell>
      <StatusCell $w={18} $center>*</StatusCell>
      <StatusCell $w={25} />
      <StatusCell $grow={313}>
        <Icon size={14}><path d="M4 0v12M0 4h9" stroke="#2020c0" /><path d="M6 6h9v8H6z" stroke="#404040" strokeDasharray="1 1" /></Icon>
        3,56 / 0,00
        <Spacer />
        <Icon size={14}><path d="M3 3h12v12H3zM1 5v8M4 1h10" stroke="#404040" strokeDasharray="1 1" /></Icon>
        9,88 x 6,68
        <Gap $w={66} />
      </StatusCell>
    </StatusRow>
    <Taskbar>
      <Start><Logo />Start</Start>
      <Grip $h={20} />
      {quick.map(([name, icon]) => (
        <Quick key={name} href="#" aria-label={name}>{icon}</Quick>
      ))}
      <Gap $w={9} />
      <Grip $h={20} />
      <Task><WriterIcon />ip_3_07_beta - Open...</Task>
      <Task><CloverIcon />MultiMAN</Task>
      <Task $on><SlicanIcon />SLICAN ConfigMAN</Task>
      <Task><WriterIcon />Bez tytułu1 - OpenOf...</Task>
      <Spacer />
      <Grip $h={20} />
      <Lang>PL</Lang>
      <Tray><b>«</b>{tray}<Spacer />08:34</Tray>
    </Taskbar>
  </>
);

const arrowRight = "M1 6h7V2h1l6 6-6 6H8v-4H1z";
const arrowUp = "M8 0l6 6v1h-3v8H6V7H2V6z";
const arrowDown = "M6 0h5v8h3v1l-6 7-6-7V8h4z";
const arrowBoth = "M4 2h3v12L2 9h2zM9 14V2l5 5h-2v7z";

export default function App() {
  return (
    <Desktop>
      <Global />
      <Writer />
      <Window>
        <TitleBar>
          <SlicanIcon />
          <h1>SLICAN ConfigMAN - MAC firmowy (MAC 00074)</h1>
          <Controls>
            <WinBtn aria-label="Minimalizuj"><MinGlyph /></WinBtn>
            <WinBtn aria-label="Maksymalizuj"><MaxGlyph /></WinBtn>
            <WinBtn $gap aria-label="Zamknij"><CloseGlyph /></WinBtn>
          </Controls>
        </TitleBar>
        <Menu>
          {["Plik", "Centrala", "Raporty", "Narzędzia", "Pomoc"].map((m) => <a key={m} href="#">{m}</a>)}
        </Menu>
        <Toolbar>
          <Grip />
          <Tool><PcUpIcon /></Tool>
          <Tool><PcDownIcon /></Tool>
          <Sep />
          <Tool><RackDownIcon /></Tool>
          <Tool><RackUpIcon /></Tool>
          <Tool><MonitorIcon /></Tool>
          <Tool><AlertIcon /></Tool>
          <Tool><PlugOffIcon /></Tool>
          <Sep />
          <Tool><ReportIcon /></Tool>
          <Sep />
          <Tool><DoorIcon /></Tool>
        </Toolbar>
        <Body>
          <Side>
            <Tabs>
              <Tab $on>Tabele</Tab>
              <Tab>Tematy</Tab>
              <Tab>Monitor</Tab>
            </Tabs>
            <TabPage>
              <TreeBox>
                <TreeView />
                <Scroll len={275} />
                <Scroll row len={146} />
              </TreeBox>
            </TabPage>
          </Side>
          <Splitter><Caret dir="left" /><i /><Caret dir="left" /></Splitter>
          <MainCol>
            <Toolbar $plain>
              <Grip />
              <Tool $w={21}><BackIcon /></Tool>
              <Tool $w={12} aria-label="Historia"><SmallCaret /></Tool>
              <Tool><ArrowIcon d={arrowRight} /></Tool>
              <Tool $w={12} aria-label="Historia"><Caret color="#808080" /></Tool>
              <Sep />
              <Tool><UndoIcon /></Tool>
              <Tool><RowIcon /></Tool>
              <Sep />
              <Tool><ArrowIcon d={arrowBoth} /></Tool>
              <Tool><ArrowIcon d={arrowUp} /></Tool>
              <Tool><ArrowIcon d={arrowDown} /></Tool>
              <Sep />
            </Toolbar>
            <Panel>
              <Banner>
                <PhoneIcon />
                <h2>Abonenci/Ruch wychodzący</h2>
                <span>220 / 1000</span>
              </Banner>
              <Filters>
                <Stack>
                  <label htmlFor="f-ext">ExtNo.</label>
                  <TextField id="f-ext" $w={64} defaultValue="____" />
                </Stack>
                <Stack>
                  <label htmlFor="f-cmt">Cmt</label>
                  <TextField id="f-cmt" $w={120} defaultValue="________________" />
                </Stack>
                <Stack>
                  <label htmlFor="f-typ">Typ/Prt</label>
                  <Combo id="f-typ" w={112} value="Wszystkie" />
                </Stack>
                <FilterBtn disabled><FunnelIcon />Filtr</FilterBtn>
                <FilterBtn disabled><FunnelIcon />Wyczyść</FilterBtn>
              </Filters>
              <GridBox>
                <TableClip>
                  <Table>
                    <colgroup>{columns.map(([n, w]) => <col key={n} width={w} />)}</colgroup>
                    <thead>
                      <tr>
                        {columns.map(([n], i) => (
                          <th key={n}>{n}{i === 0 && <Caret color="#808080" />}</th>
                        ))}
                      </tr>
                    </thead>
                    <tbody>
                      {rows.map((r, i) => (
                        <Line key={r[0]} $on={i === 3}>
                          {r.map((c, k) => (k < 3 ? <th key={k} scope="row">{c}</th> : <td key={k}>{c}</td>))}
                        </Line>
                      ))}
                    </tbody>
                  </Table>
                </TableClip>
                <Scroll len={8} before={3} />
                <Scroll row len={16} />
              </GridBox>
            </Panel>
            <Splitter $row><Caret /><i /><Caret /></Splitter>
            <Form>
              <Columns $gap={4}>
                <LeftForms>
                  <Group $w={216} $h={80} $pad="3px 8px">
                    <Block>
                      <Caption htmlFor="ext"><b>ExtNo.</b> - Numer katalogowy</Caption>
                      <Row $h={17}><TextField id="ext" $flat $w={72} readOnly value="1059" /></Row>
                    </Block>
                    <Caption htmlFor="cmt"><b>Cmt</b> - Komentarz</Caption>
                    <Row $h={17}><TextField id="cmt" $flat $w={176} readOnly value="MaciejM DECT IP" /></Row>
                  </Group>
                  <Framed $h={74}>
                    <legend><b>CLIP</b> - Prezentacja numeru na mieście</legend>
                    <Row><Combo w={152} value="Numer grupy" label="CLIP" /></Row>
                    <Row $h={32} $gap={5}>
                      <TextField $flat $w={128} readOnly value="165_. Mikołajewski" aria-label="Numer CLIP" />
                      <Small type="button" aria-label="Tabela"><TableIcon /></Small>
                      <Small type="button" aria-label="Przejdź"><JumpIcon /></Small>
                    </Row>
                  </Framed>
                  <Framed $h={82}>
                    <legend><b>PrfHL</b> - Preferowana gorąca linia</legend>
                    <Row $gap={5}>
                      <Combo w={176} value="<Brak>" label="PrfHL" />
                      <Small type="button" aria-label="Przejdź"><JumpIcon /></Small>
                    </Row>
                  </Framed>
                </LeftForms>
                <Group $w={360} $h={247} $pad="5px 11px 0">
                  {access.map(([code, text, value]) => (
                    <Item key={code}>
                      <Caption htmlFor={code}><b>{code}</b> - {text}</Caption>
                      <Picker>
                        <TextField id={code} $flat $w={128} readOnly value={value} />
                        <Small type="button" aria-label="Tabela"><TableIcon /></Small>
                        <JumpSplit menu={code === "DayPrg"} pressed={code === "PrvPrg"} />
                      </Picker>
                    </Item>
                  ))}
                </Group>
              </Columns>
              <Columns $gap={5}>
                <Group $w={304} $h={75} $pad="5px 8px 0">
                  <Caption htmlFor="phlck"><b>PhLck</b> - Automatyczna blokada telefonu</Caption>
                  <Row $gap={8}>
                    <Combo id="phlck" w={136} value="Wyłączony" />
                    <JumpSplit />
                  </Row>
                  <Dnd><Box /><b>DNDLck</b> -<span>Synchronizacja DND z blokadą telefonu</span></Dnd>
                </Group>
                <Group $w={272} $h={75} $pad="7px 5px 0">
                  <Check><Box /><b>CLIR</b> -<span>Blokada prezentacji numeru</span></Check>
                  <Check><Box /><b>CLIRt</b> -<span>{"Zezwolenie na chwilową blokadę\nprezentacji numeru"}</span></Check>
                  <Vip><Box /><b>VIP</b> -<span>Podwyższony priorytet połączeń</span></Vip>
                </Group>
              </Columns>
            </Form>
          </MainCol>
        </Body>
        <AppStatus>
          <StatusCell $grow={299} />
          <StatusCell $w={118} $center>OFFLINE</StatusCell>
          <StatusCell $grow={274}>Lokalizacja: C:\Program Files\Slican\pabx data\MAC firmowy</StatusCell>
          <StatusCell $w={150}>Typ centrali: MAC-6400</StatusCell>
          <StatusCell $w={18}><PencilIcon /></StatusCell>
          <StatusCell $w={17}><MiniRowIcon /></StatusCell>
        </AppStatus>
      </Window>
    </Desktop>
  );
}
